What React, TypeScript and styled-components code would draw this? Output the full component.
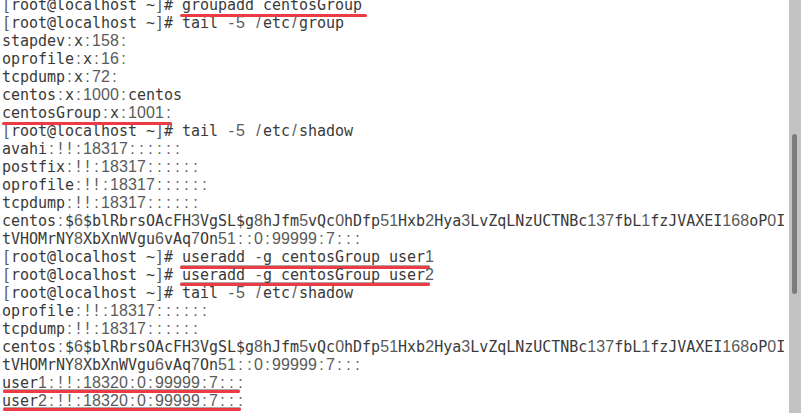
import React from "react";
import styled, { createGlobalStyle } from "styled-components";

const Global = createGlobalStyle`
  html, body { margin: 0; padding: 0; background: #ffffff; overflow: hidden; }
`;

const Screen = styled.div`
  display: flex;
  width: 801px;
  height: 413px;
  background: #ffffff;
  overflow: hidden;
`;

const Terminal = styled.div`
  flex: 1;
  min-width: 0;
  overflow: hidden;
  padding-left: 2px;
`;

const Lines = styled.div`
  margin-top: -4px;
  font-family: "DejaVu Sans Mono", "Liberation Mono", monospace;
  font-size: 15px;
  letter-spacing: -0.03px;
  line-height: 18px;
  color: #3a3a3a;
  white-space: pre;
`;

const Line = styled.div`
  height: 18px;
`;

const Cell = styled.span`
  display: inline-block;
  width: 9px;
  text-align: center;
  letter-spacing: 0;
  font-family: "Liberation Sans", Arial, sans-serif;
  font-weight: 400;
  font-size: 16px;
  color: #5a5a5a;
`;

const Marked = styled.span<{ $drop: number; $l: number; $r: number; $edge?: boolean }>`
  position: relative;
  &::after {
    content: "";
    position: absolute;
    left: ${(p) => p.$l}px;
    right: ${(p) => p.$r}px;
    bottom: ${(p) => -p.$drop}px;
    height: 3px;
    border-radius: 2px;
    background: #ec3b44;
    box-shadow: ${(p) => (p.$edge ? "0 -1px 0 rgba(70, 60, 60, 0.45)" : "none")};
  }
`;

const Track = styled.div`
  flex: none;
  width: 12px;
  box-sizing: border-box;
  padding-top: 134px;
  background: #c3c3c3;
`;

const Thumb = styled.div`
  width: 5px;
  height: 160px;
  margin-left: 3px;
  border-radius: 3px;
  background: #7b7d7d;
`;

const THIN = /[0-9:!\[\]\/\-]/;

function Glyphs({ text }: { text: string }) {
  const parts: React.ReactNode[] = [];
  let run = "";
  let key = 0;
  for (const ch of text) {
    if (THIN.test(ch)) {
      if (run) {
        parts.push(<React.Fragment key={key++}>{run}</React.Fragment>);
        run = "";
      }
      parts.push(<Cell key={key++}>{ch}</Cell>);
    } else {
      run += ch;
    }
  }
  if (run) parts.push(<React.Fragment key={key++}>{run}</React.Fragment>);
  return <>{parts}</>;
}

type Mark = { text: string; drop: number; l: number; r: number; edge?: boolean };
type Seg = string | Mark;

const PROMPT = "[root@localhost ~]# ";
const HASH =
  "centos:$6$blRbrsOAcFH3VgSL$g8hJfm5vQc0hDfp51Hxb2Hya3LvZqLNzUCTNBc137fbL1fzJVAXEI168oP0I";
const HASH2 = "tVHOMrNY8XbXnWVgu6vAq7On51::0:99999:7:::";

const lines: Seg[][] = [
  [PROMPT, { text: "groupadd centosGroup", drop: 2.5, l: -2, r: -5 }],
  [PROMPT + "tail -5 /etc/group"],
  ["stapdev:x:158:"],
  ["oprofile:x:16:"],
  ["tcpdump:x:72:"],
  ["centos:x:1000:centos"],
  [{ text: "centosGroup:x:1001:", drop: 3, l: 0, r: 1 }],
  [PROMPT + "tail -5 /etc/shadow"],
  ["avahi:!!:18317::::::"],
  ["postfix:!!:18317::::::"],
  ["oprofile:!!:18317::::::"],
  ["tcpdump:!!:18317::::::"],
  [HASH],
  [HASH2],
  [PROMPT, { text: "useradd -g centosGroup user1", drop: 3, l: -2, r: 4, edge: true }],
  [PROMPT, { text: "useradd -g centosGroup user2", drop: 1.7, l: -2, r: 4, edge: true }],
  [PROMPT + "tail -5 /etc/shadow"],
  ["oprofile:!!:18317::::::"],
  ["tcpdump:!!:18317::::::"],
  [HASH],
  [HASH2],
  [{ text: "user1:!!:18320:0:99999:7:::", drop: 1, l: 1, r: 5, edge: true }],
  [{ text: "user2:!!:18320:0:99999:7:::", drop: 1, l: 1, r: 4, edge: true }],
];

export default function App() {
  return (
    <>
      <Global />
      <Screen>
        <Terminal>
          <Lines>
            {lines.map((segs, i) => (
              <Line key={i}>
                {segs.map((s, j) =>
                  typeof s === "string" ? (
                    <Glyphs key={j} text={s} />
                  ) : (
                    <Marked key={j} $drop={s.drop} $l={s.l} $r={s.r} $edge={s.edge}>
                      <Glyphs text={s.text} />
                    </Marked>
                  )
                )}
              </Line>
            ))}
          </Lines>
        </Terminal>
        <Track>
          <Thumb />
        </Track>
      </Screen>
    </>
  );
}
